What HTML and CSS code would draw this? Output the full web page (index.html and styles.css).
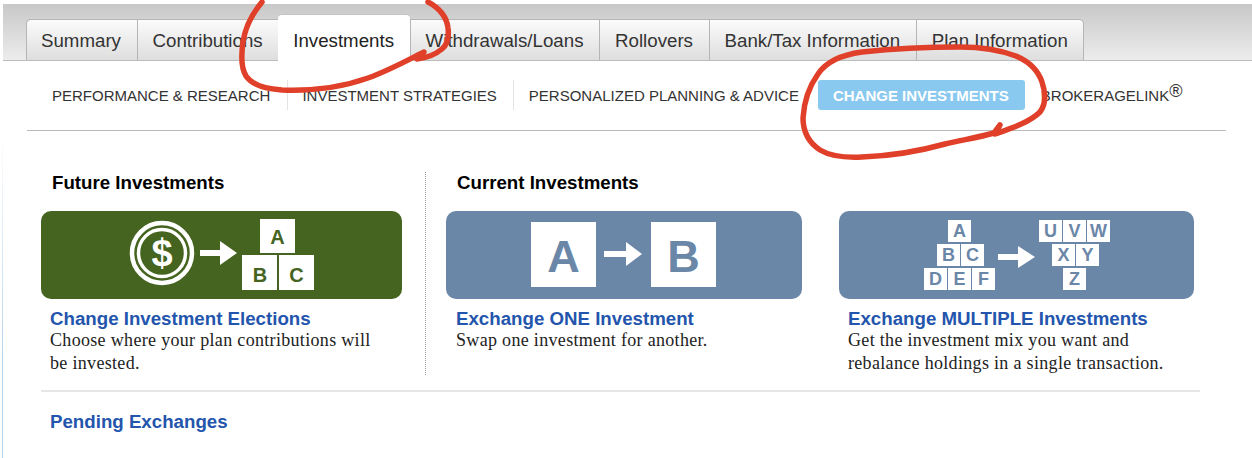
FILE: index.html
```html
<!DOCTYPE html>
<html lang="en">
<head>
<meta charset="utf-8">
<title>Change Investments</title>
<link rel="stylesheet" href="styles.css">
</head>
<body>
<div class="page">
  <nav class="tabs">
    <a class="tab">Summary</a>
    <a class="tab">Contributions</a>
    <a class="tab active">Investments</a>
    <a class="tab">Withdrawals/Loans</a>
    <a class="tab">Rollovers</a>
    <a class="tab">Bank/Tax Information</a>
    <a class="tab last">Plan Information</a>
  </nav>
  <nav class="subnav">
    <a class="sub first">PERFORMANCE &amp; RESEARCH</a>
    <a class="sub second">INVESTMENT STRATEGIES</a>
    <a class="sub">PERSONALIZED PLANNING &amp; ADVICE</a>
    <a class="sub current">CHANGE INVESTMENTS</a>
    <a class="sub plain">BROKERAGELINK<sup class="reg">®</sup></a>
  </nav>
  <main class="content">
    <div class="columns">
      <section class="future">
        <h2 class="heading">Future Investments</h2>
        <div class="banner green">
          <svg class="art" viewBox="41 211 361 88" width="361" height="88">
            <circle cx="162" cy="253" r="30" fill="none" stroke="#fff" stroke-width="4.500"/>
            <circle cx="162" cy="253" r="23.500" fill="none" stroke="#fff" stroke-width="3.500"/>
            <text class="dollar" x="162" y="266" fill="#fff">$</text>
            <path d="M200 250h20v-9l17 12-17 12v-9h-20z" fill="#fff"/>
            <g fill="#fff">
              <rect x="260" y="219" width="35" height="34"/>
              <rect x="242" y="255" width="35" height="35"/>
              <rect x="279" y="255" width="35" height="35"/>
            </g>
            <g class="lt lg" fill="#44641f">
              <text x="277.500" y="244">A</text>
              <text x="260" y="282">B</text>
              <text x="296.500" y="282">C</text>
            </g>
          </svg>
        </div>
        <h3 class="link">Change Investment Elections</h3>
        <p class="desc">Choose where your plan contributions will be invested.</p>
      </section>
      <section class="current-one">
        <h2 class="heading">Current Investments</h2>
        <div class="banner blue">
          <svg class="art" viewBox="446 211 356 88" width="356" height="88">
            <g fill="#fff">
              <rect x="531" y="222" width="65" height="65"/>
              <rect x="651" y="222" width="65" height="65"/>
              <path d="M604 251h22v-9l16 12-16 12v-9h-22z"/>
            </g>
            <g class="lt xl" fill="#6b87a8">
              <text x="563.500" y="272">A</text>
              <text x="683.500" y="272">B</text>
            </g>
          </svg>
        </div>
        <h3 class="link">Exchange ONE Investment</h3>
        <p class="desc">Swap one investment for another.</p>
      </section>
      <section class="current-multi">
        <div class="banner blue">
          <svg class="art" viewBox="839 211 355 88" width="355" height="88">
            <g fill="#fff">
              <rect x="948" y="220" width="23" height="22"/>
              <rect x="937" y="244" width="23" height="22"/>
              <rect x="961" y="244" width="23" height="22"/>
              <rect x="924" y="268" width="23" height="22"/>
              <rect x="948" y="268" width="23" height="22"/>
              <rect x="972" y="268" width="23" height="22"/>
              <path d="M998 254h20v-8l17 11-17 11v-8h-20z"/>
              <rect x="1039" y="220" width="23" height="22"/>
              <rect x="1063" y="220" width="23" height="22"/>
              <rect x="1087" y="220" width="23" height="22"/>
              <rect x="1052" y="244" width="23" height="22"/>
              <rect x="1076" y="244" width="23" height="22"/>
              <rect x="1063" y="268" width="23" height="22"/>
            </g>
            <g class="lt sm" fill="#6b87a8">
              <text x="959.500" y="237">A</text>
              <text x="948.500" y="261">B</text>
              <text x="972.500" y="261">C</text>
              <text x="935.500" y="285">D</text>
              <text x="959.500" y="285">E</text>
              <text x="983.500" y="285">F</text>
              <text x="1050.500" y="237">U</text>
              <text x="1074.500" y="237">V</text>
              <text x="1098.500" y="237">W</text>
              <text x="1063.500" y="261">X</text>
              <text x="1087.500" y="261">Y</text>
              <text x="1074.500" y="285">Z</text>
            </g>
          </svg>
        </div>
        <h3 class="link">Exchange MULTIPLE Investments</h3>
        <p class="desc">Get the investment mix you want and rebalance holdings in a single transaction.</p>
      </section>
    </div>
    <hr class="rule">
    <h3 class="link pending">Pending Exchanges</h3>
  </main>
  <svg class="marks" viewBox="0 0 1252 458" width="1252" height="458" aria-hidden="true">
    <path d="M262 2C252 14 245 28 243 42C241 56 241 68 246 76C252 85 266 89 282 90C310 91 340 88 368 78C388 71 408 60 424 52L417 59C426 58 436 54 442 49C448 44 449 36 448 28C447 18 440 8 428 2"/>
    <path d="M994 133L1000 125L995 134C1012 128 1030 122 1040 112C1046 104 1046 94 1042 82C1038 70 1030 62 1016 56C1000 50 985 47 960 47C925 47 890 49 862 52C840 55 826 62 818 74C808 88 804 102 803 118C803 132 808 142 820 150C830 156 842 158 862 157C890 156 920 151 945 144C962 140 980 137 994 133Z"/>
  </svg>
</div>
</body>
</html>
```
FILE: styles.css
```css
* { box-sizing: border-box; }
html, body { margin: 0; padding: 0; background: #fff; }
body { width: 1252px; height: 458px; overflow: hidden; font-family: "Liberation Sans", Arial, sans-serif; }
.page { position: relative; width: 1252px; height: 458px; padding-top: 4px; overflow: hidden; }

.tabs {
  display: flex; align-items: flex-end; height: 57px; margin-left: 3px; padding-left: 23px;
  background: linear-gradient(#c8c8c8, #ececec);
  border-bottom: 1px solid #bcbcbc;
}
.tab {
  display: flex; align-items: center; height: 41px; padding: 1px 15.600px 0 15px;
  font-size: 18.700px; color: #333;
  background: linear-gradient(#fbfbfb, #dedede);
  border-left: 1px solid #b5b5b5;
  border-top: 1px solid #b5b5b5;
  white-space: nowrap;
}
.tab:first-child { padding-left: 14px; border-top-left-radius: 5px; }
.tab.last { border-right: 1px solid #b5b5b5; border-top-right-radius: 5px; }
.tab.active {
  height: 47px; margin-bottom: -1px; padding-top: 5px; background: #fff; color: #222;
  border-top: 1px solid #c4c4c4; border-radius: 4px 4px 0 0; border-left: 0;
}

.subnav {
  display: flex; align-items: center; height: 70px; margin: 0 26px 0 27px; padding: 0 0 1px 25px;
  border-bottom: 1px solid #bbb;
}
.sub {
  display: flex; align-items: center; height: 30px; font-size: 15px; color: #333; padding: 0 16px 0 15px;
  border-left: 1px solid #e4e4e4; white-space: nowrap;
}
.sub.first { border-left: 0; padding: 0 17px 0 0; }
.sub.second { padding-left: 14px; }
.sub.current {
  margin: 0 16px 0 3px; padding: 0 16px 0 15px; background: #8ac9ef; color: #fff; font-weight: 700; border: 0; border-radius: 3px;
}
.sub.plain { border-left: 0; padding: 0; }
.reg { font-size: 18px; line-height: 0; margin-top: -9px; }

.content {
  height: 327px; margin-left: 2px; padding: 41px 0 0 0;
  border-left: 1px solid; border-image: linear-gradient(#fff, #e6f0f9 25%, #b4d4ee 70%) 1;
}
.columns { display: grid; grid-template-columns: 423px 413px 355px; }
.future { padding-left: 38px; padding-right: 23px; border-right: 1px dotted #999; height: 203px; }
.current-one { padding-left: 20px; padding-right: 37px; }
.current-multi { padding-top: 39px; }
.heading { margin: 0 0 18px 11px; font-size: 18.700px; line-height: 21px; font-weight: 700; color: #000; }
.banner { height: 88px; border-radius: 10px; overflow: hidden; }
.green { background: #44641f; }
.blue { background: #6b87a8; }
.art { display: block; }
.link { margin: 9px 0 0 9px; font-size: 18.700px; line-height: 21px; font-weight: 700; color: #2355ad; }
.current-one .link, .current-one .desc { margin-left: 10px; }
.desc {
  max-width: 332px; margin: 0 0 0 9px; font-family: "Liberation Serif", "Times New Roman", serif; font-size: 18px; line-height: 23px;
  color: #222; letter-spacing: .32px;
}
.rule { height: 2px; margin: 15px 52px 0 38px; border: 0; background: #e6e6e6; }
.link.pending { margin: 19px 0 0 47px; }

.lt text { font-family: "Liberation Sans", Arial, sans-serif; font-weight: 700; text-anchor: middle; }
.lg text { font-size: 20px; }
.xl text { font-size: 45px; }
.sm text { font-size: 18px; }
.dollar { font-family: "Liberation Sans", Arial, sans-serif; font-size: 38px; font-weight: 700; text-anchor: middle; }

.marks { position: absolute; left: 0; top: 0; pointer-events: none; }
.marks path { fill: none; stroke: #e0402a; stroke-width: 5.500; stroke-linecap: round; stroke-linejoin: round; }
```
